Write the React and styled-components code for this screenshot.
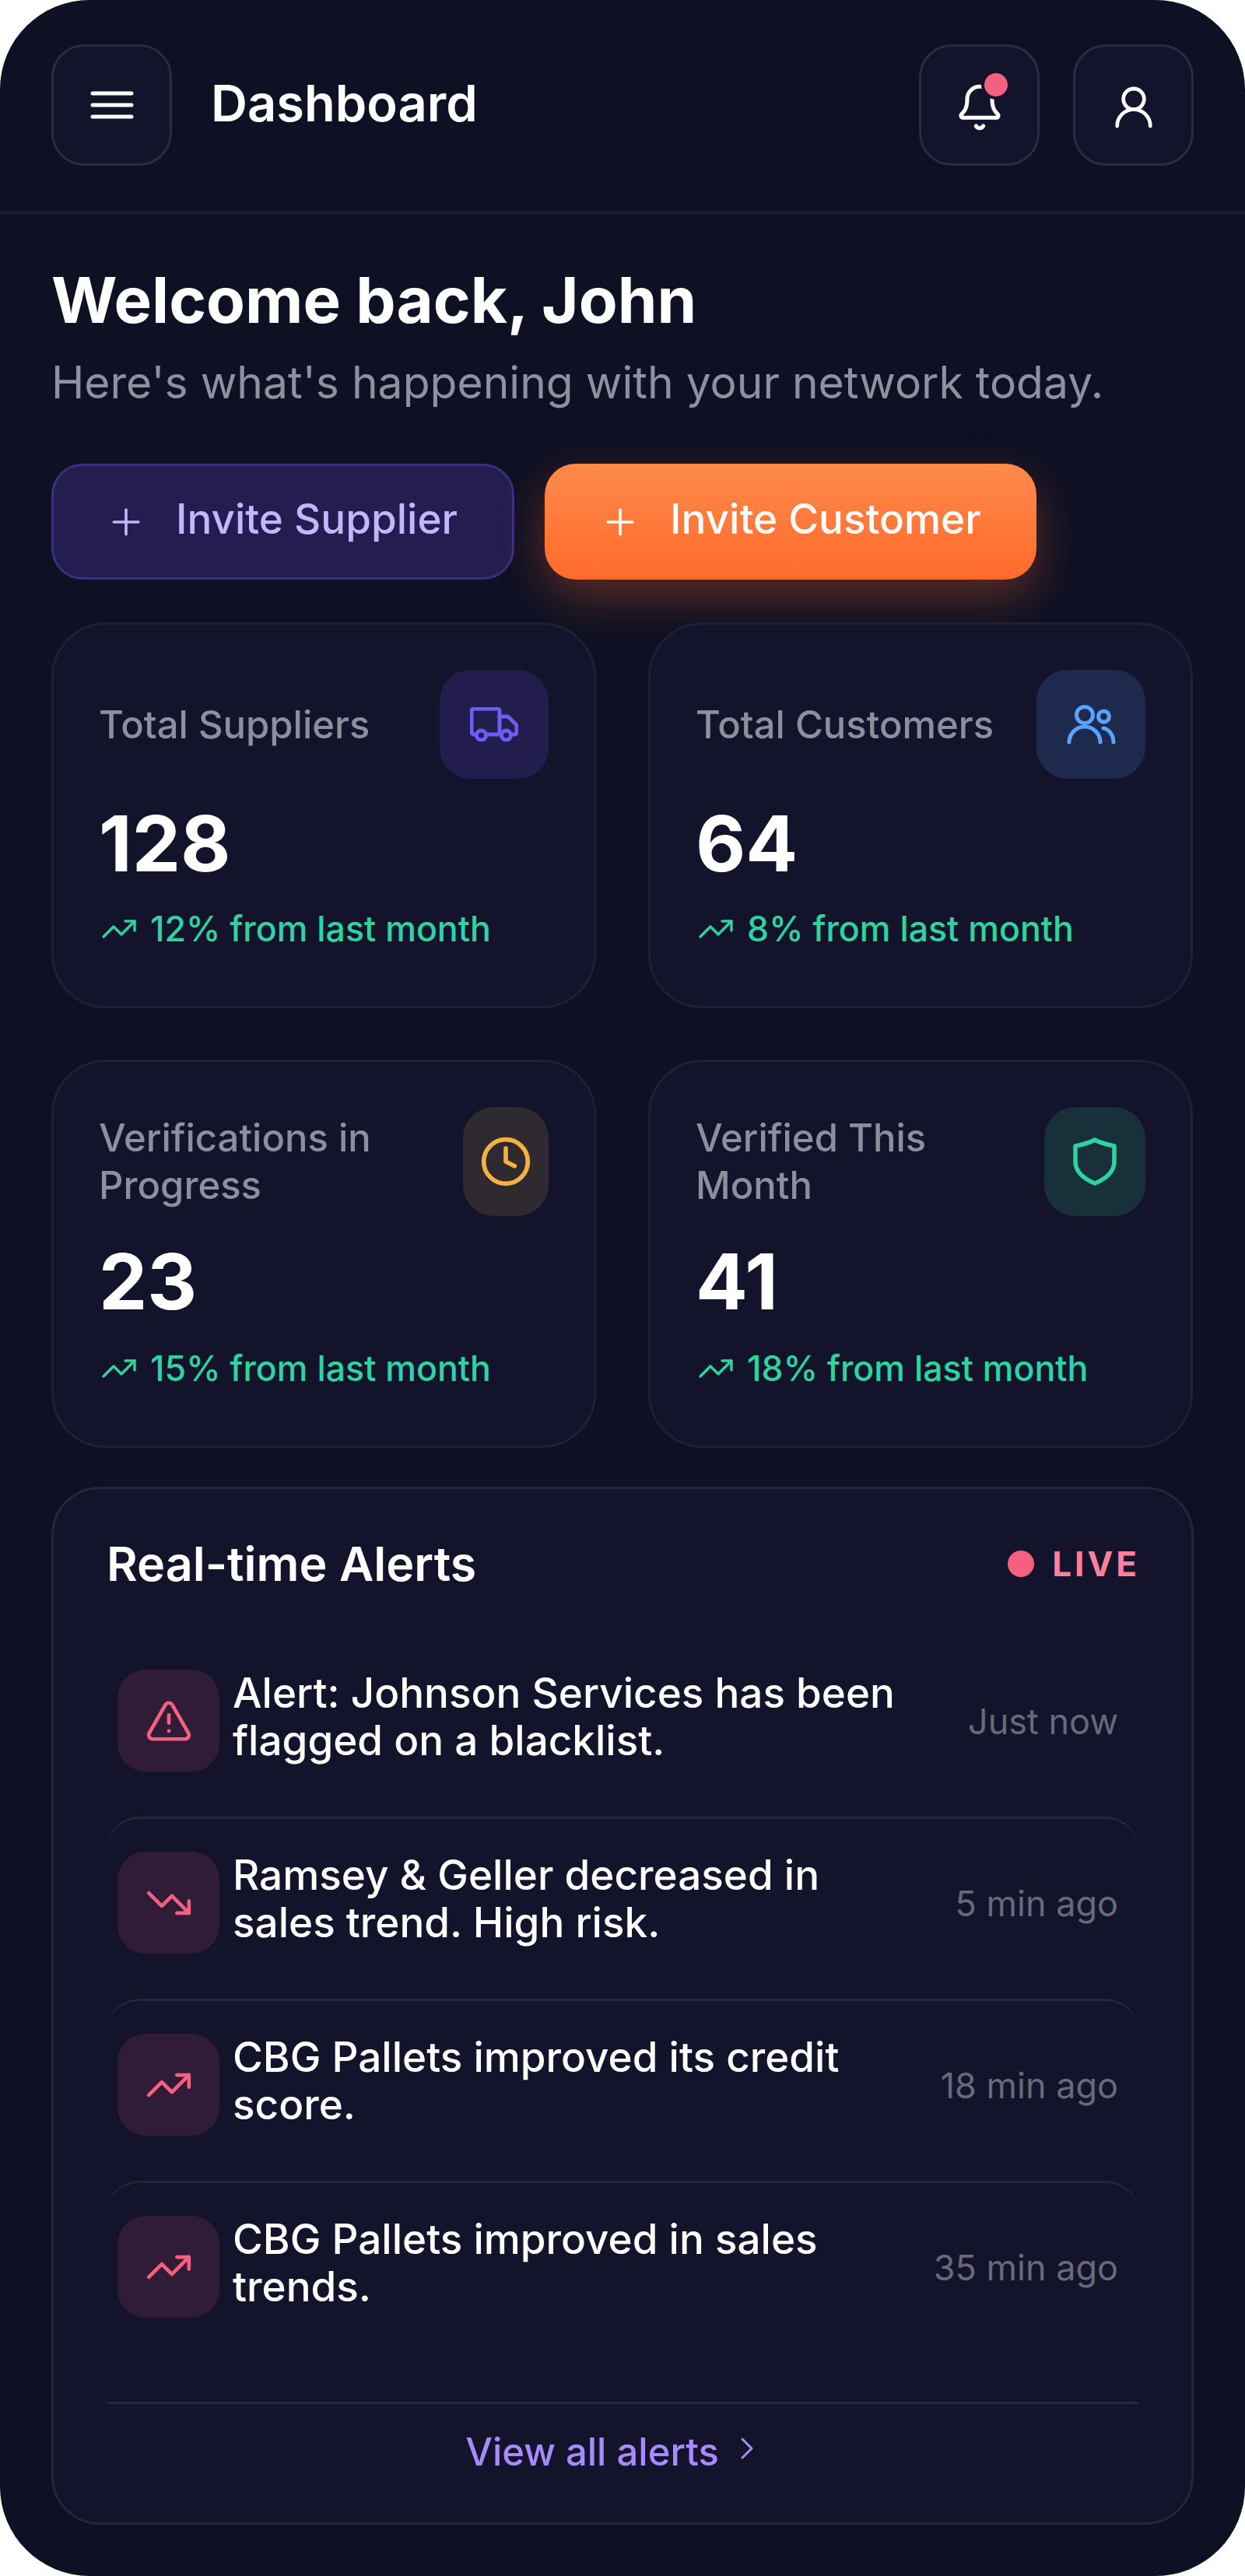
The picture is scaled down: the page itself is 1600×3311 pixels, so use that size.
import React from "react";
import styled, { createGlobalStyle } from "styled-components";
import {
  Bell,
  ChevronRight,
  Clock,
  Plus,
  TrendingDown,
  TrendingUp,
  TriangleAlert,
  UserRound,
} from "lucide-react";

const GlobalStyle = createGlobalStyle`
  html, body {
    margin: 0;
    padding: 0;
    background: #fff;
  }
  * {
    box-sizing: border-box;
  }
`;

const Screen = styled.div`
  width: 1600px;
  height: 3311px;
  border-radius: 115px;
  overflow: hidden;
  background: #0e1023;
  color: #fff;
  font-family: Inter, "Liberation Sans", sans-serif;
`;

const Header = styled.header`
  height: 275px;
  padding: 57px 66px 0;
  display: flex;
  align-items: flex-start;
  border-bottom: 3px solid #1c1e35;
`;

const IconButton = styled.button`
  position: relative;
  width: 155px;
  height: 156px;
  padding: 0;
  display: flex;
  align-items: center;
  justify-content: center;
  color: #fff;
  background: #13132b;
  border: 3px solid #2b2c42;
  border-radius: 42px;
`;

const Title = styled.h1`
  margin: 0 auto 0 50px;
  font-size: 65px;
  line-height: 152px;
  font-weight: 600;
`;

const Actions = styled.div`
  display: flex;
  gap: 43px;
  svg {
    margin-top: 5px;
  }
`;

const Dot = styled.span`
  position: absolute;
  top: 34px;
  left: 81px;
  width: 30px;
  height: 30px;
  border-radius: 50%;
  background: #f4607f;
  box-shadow: 0 0 0 4px #13132b;
`;

const Main = styled.main`
  padding: 58px 66px 0;
`;

const Heading = styled.h2`
  margin: 0;
  font-size: 81.5px;
  line-height: 106px;
  font-weight: 700;
`;

const Subtitle = styled.p`
  margin: 16px 0 0;
  font-size: 57px;
  line-height: 74px;
  color: #9091a0;
`;

const ButtonRow = styled.div`
  display: flex;
  gap: 39px;
  margin-top: 67px;
`;

const InviteButton = styled.button`
  height: 149px;
  padding: 0 ${(p) => (p.$primary ? "71px" : "70px")} 8px ${(p) => (p.$primary ? "70px" : "66px")};
  display: flex;
  align-items: center;
  gap: 37px;
  font-family: inherit;
  font-size: 53px;
  font-weight: 500;
  border-radius: 40px;
  color: ${(p) => (p.$primary ? "#fff" : "#c4b5fd")};
  background: ${(p) =>
    p.$primary ? "linear-gradient(180deg, #ff8a4a, #ff6a2c)" : "#231e4f"};
  border: ${(p) => (p.$primary ? "none" : "3px solid #3b2f80")};
  box-shadow: ${(p) =>
    p.$primary ? "0 22px 60px rgba(255, 107, 44, 0.32)" : "none"};
  svg {
    margin-top: 8px;
  }
`;

const StatGrid = styled.div`
  display: grid;
  grid-template-columns: 700px 700px;
  column-gap: 67px;
  row-gap: 66px;
  margin-top: 55px;
`;

const StatCard = styled.section`
  height: ${(p) => p.$height}px;
  padding: 58px 58px 71px;
  display: flex;
  flex-direction: column;
  background: #13142b;
  border: 3px solid #1f2036;
  border-radius: 70px;
`;

const StatTop = styled.div`
  display: flex;
  align-items: center;
  justify-content: space-between;
  gap: 20px;
`;

const StatLabel = styled.span`
  font-size: 49px;
  line-height: 61px;
  font-weight: 500;
  color: #8e8f9d;
`;

const StatIcon = styled.div`
  width: 140px;
  height: 140px;
  display: flex;
  align-items: center;
  justify-content: center;
  border-radius: 40px;
  color: ${(p) => p.$color};
  background: ${(p) => p.$bg};
`;

const StatValue = styled.div`
  margin-top: auto;
  font-size: 99px;
  line-height: 120px;
  font-weight: 700;
`;

const StatDelta = styled.div`
  margin-top: auto;
  display: flex;
  align-items: center;
  gap: 16px;
  font-size: 44.7px;
  line-height: 56px;
  font-weight: 500;
  color: #2dd4a0;
  svg {
    margin-left: 2px;
  }
`;

const AlertsCard = styled.section`
  height: 1334px;
  margin-top: 50px;
  padding: 58px 68px 0;
  background: #13142b;
  border: 3px solid #25263c;
  border-radius: 62px;
`;

const AlertsHead = styled.div`
  display: flex;
  align-items: center;
  justify-content: space-between;
  height: 76px;
`;

const AlertsTitle = styled.h3`
  margin: 0;
  font-size: 61px;
  font-weight: 600;
`;

const Live = styled.div`
  display: flex;
  align-items: center;
  gap: 23px;
  margin-right: -2px;
  font-size: 44px;
  font-weight: 700;
  letter-spacing: 4px;
  color: #fb7f9e;
  &::before {
    content: "";
    width: 34px;
    height: 34px;
    border-radius: 50%;
    background: #f4607f;
  }
`;

const AlertList = styled.div`
  margin-top: 53px;
`;

const AlertRow = styled.div`
  height: 218px;
  margin-bottom: 16px;
  padding: 42px 26px 0 14px;
  display: flex;
  align-items: flex-start;
  border-top: 3px solid ${(p) => (p.$first ? "transparent" : "#25263c")};
  border-radius: 42px;
`;

const AlertIcon = styled.div`
  flex: none;
  width: 131px;
  height: 131px;
  display: flex;
  align-items: center;
  justify-content: center;
  border-radius: 36px;
  color: #f4607f;
  background: #301c36;
`;

const AlertText = styled.p`
  flex: 1;
  max-width: 870px;
  margin: 0 0 0 17px;
  font-size: 53px;
  line-height: 61px;
  font-weight: 500;
`;

const AlertTime = styled.span`
  flex: none;
  margin: 38px 0 0 auto;
  font-size: 45px;
  line-height: 58px;
  color: #686979;
`;

const AlertsFooter = styled.div`
  margin-top: 66px;
  padding: 24px 18px 0 0;
  display: flex;
  align-items: center;
  justify-content: center;
  gap: 12px;
  border-top: 3px solid #25263c;
  font-size: 49px;
  line-height: 76px;
  font-weight: 500;
  color: #a78bfa;
  svg {
    margin-top: -10px;
  }
`;

const MenuIcon = () => (
  <svg width="56" height="38" viewBox="0 0 56 38" fill="none" stroke="currentColor" strokeWidth="5" strokeLinecap="round">
    <path d="M3 4h50M3 19h50M3 34h50" />
  </svg>
);

const TruckIcon = () => (
  <svg width="62" height="44" viewBox="0 0 62 44" fill="none" stroke="currentColor" strokeWidth="5" strokeLinecap="round" strokeLinejoin="round">
    <path d="M8 35H5a3 3 0 0 1-3-3V5a3 3 0 0 1 3-3h30a3 3 0 0 1 3 3v30H21" />
    <path d="M38 12h10a3 3 0 0 1 2 1l9 9a3 3 0 0 1 1 2v8a3 3 0 0 1-3 3h-3M40 35h-2" />
    <circle cx="14.5" cy="36" r="6" />
    <circle cx="46.5" cy="36" r="6" />
  </svg>
);

const UsersIcon = () => (
  <svg width="63" height="51" viewBox="0 0 63 51" fill="none" stroke="currentColor" strokeWidth="5" strokeLinecap="round">
    <circle cx="23" cy="13" r="10.5" />
    <circle cx="47.5" cy="15" r="7" />
    <path d="M3 48a20 20 0 0 1 40 0" />
    <path d="M47 30c7 1 13 9 13 18" />
  </svg>
);

const ShieldIcon = () => (
  <svg width="58" height="64" viewBox="0 0 58 64" fill="none" stroke="currentColor" strokeWidth="5.5" strokeLinejoin="round">
    <path d="M29 4c7 4 15 6 25 8v20c0 14-13 23-25 28C17 55 4 46 4 32V12c10-2 18-4 25-8z" />
  </svg>
);

const stats = [
  { label: "Total Suppliers", value: "128", delta: "12% from last month", color: "#6d5cf6", bg: "#231d4d", icon: <TruckIcon />, height: 496 },
  { label: "Total Customers", value: "64", delta: "8% from last month", color: "#5aa2ff", bg: "#1e2a4d", icon: <UsersIcon />, height: 496 },
  { label: "Verifications in Progress", value: "23", delta: "15% from last month", color: "#f5b042", bg: "#2f2a30", icon: <Clock size={68} strokeWidth={2} />, height: 499 },
  { label: "Verified This Month", value: "41", delta: "18% from last month", color: "#2dd4a0", bg: "#17303a", icon: <ShieldIcon />, height: 499 },
];

const alerts = [
  { text: "Alert: Johnson Services has been flagged on a blacklist.", time: "Just now", icon: <TriangleAlert size={62} strokeWidth={1.8} /> },
  { text: "Ramsey & Geller decreased in sales trend. High risk.", time: "5 min ago", icon: <TrendingDown size={62} strokeWidth={1.8} /> },
  { text: "CBG Pallets improved its credit score.", time: "18 min ago", icon: <TrendingUp size={62} strokeWidth={1.8} /> },
  { text: "CBG Pallets improved in sales trends.", time: "35 min ago", icon: <TrendingUp size={62} strokeWidth={1.8} /> },
];

const App = () => {
  return (
    <Screen>
      <GlobalStyle />
      <Header>
        <IconButton>
          <MenuIcon />
        </IconButton>
        <Title>Dashboard</Title>
        <Actions>
          <IconButton>
            <Bell size={64} strokeWidth={1.9} />
            <Dot />
          </IconButton>
          <IconButton>
            <UserRound size={64} strokeWidth={1.8} />
          </IconButton>
        </Actions>
      </Header>
      <Main>
        <Heading>Welcome back, John</Heading>
        <Subtitle>Here's what's happening with your network today.</Subtitle>
        <ButtonRow>
          <InviteButton>
            <Plus size={54} strokeWidth={1.6} />
            Invite Supplier
          </InviteButton>
          <InviteButton $primary>
            <Plus size={54} strokeWidth={1.6} />
            Invite Customer
          </InviteButton>
        </ButtonRow>
        <StatGrid>
          {stats.map((s) => (
            <StatCard key={s.label} $height={s.height}>
              <StatTop>
                <StatLabel>{s.label}</StatLabel>
                <StatIcon $color={s.color} $bg={s.bg}>
                  {s.icon}
                </StatIcon>
              </StatTop>
              <StatValue>{s.value}</StatValue>
              <StatDelta>
                <TrendingUp size={48} strokeWidth={1.7} />
                {s.delta}
              </StatDelta>
            </StatCard>
          ))}
        </StatGrid>
        <AlertsCard>
          <AlertsHead>
            <AlertsTitle>Real-time Alerts</AlertsTitle>
            <Live>LIVE</Live>
          </AlertsHead>
          <AlertList>
            {alerts.map((a, i) => (
              <AlertRow key={a.text} $first={i === 0}>
                <AlertIcon>{a.icon}</AlertIcon>
                <AlertText>{a.text}</AlertText>
                <AlertTime>{a.time}</AlertTime>
              </AlertRow>
            ))}
          </AlertList>
          <AlertsFooter>
            View all alerts
            <ChevronRight size={48} strokeWidth={1.5} />
          </AlertsFooter>
        </AlertsCard>
      </Main>
    </Screen>
  );
};

export default App;
